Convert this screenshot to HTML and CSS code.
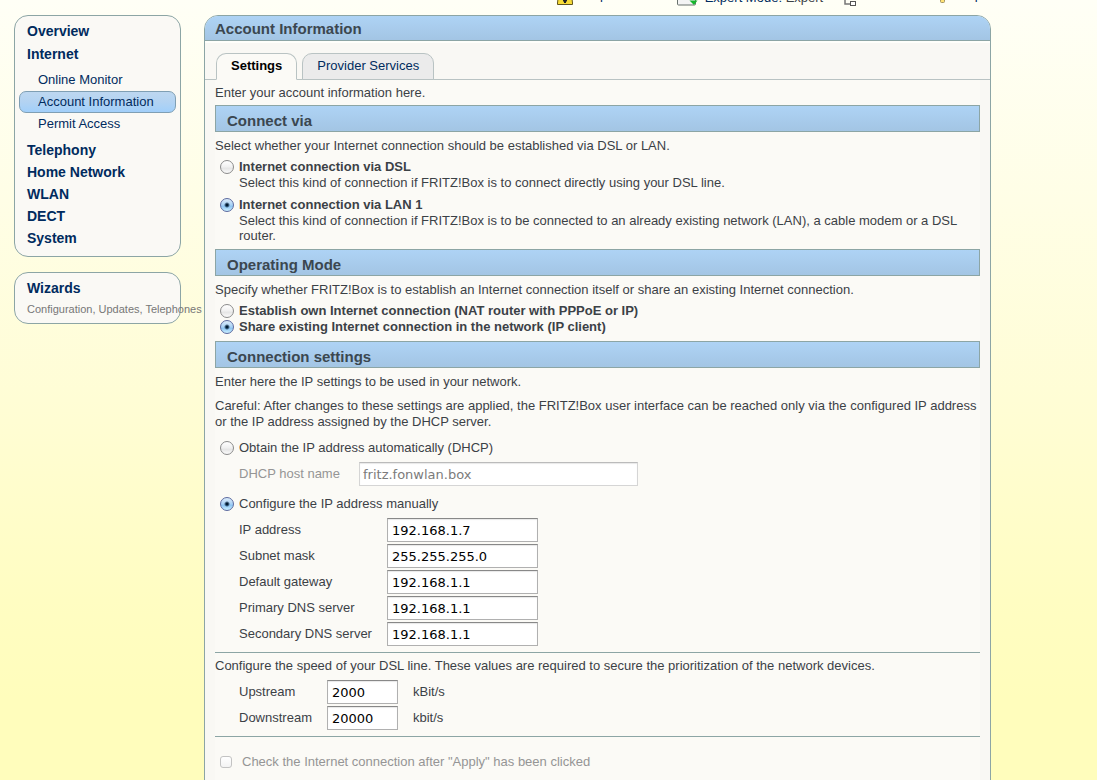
FILE: index.html
```
<!DOCTYPE html>
<html lang="en">
<head>
<meta charset="utf-8">
<title>FRITZ!Box – Account Information</title>
<link rel="stylesheet" href="styles.css">
</head>
<body>
<header class="toolbar">
  <a class="tool raised" href="#"><svg width="16" height="12" viewBox="0 0 16 12"><path d="M2 -4L.5 9v1.500h15V9L14 -4z" fill="#f8dc38" stroke="#62551c"/><path d="M8 2v7M6 6.500h4" stroke="#222" stroke-width="2"/></svg><span>No password</span></a>
  <a class="tool" href="#"><svg width="21" height="12" viewBox="0 0 21 12"><rect x=".5" y="-5" width="18" height="16" rx="1" fill="#f4f4f4" stroke="#68716d"/><path d="M12.500 6.500h8L17 11z" fill="#15b52c"/></svg><span>Expert Mode: <span class="mode">Expert</span></span></a>
  <a class="tool raised contents" href="#"><svg width="12" height="12" viewBox="0 0 12 12"><path d="M1 0v10h6" fill="none" stroke="#777" stroke-width="1.500"/><rect x="6.500" y="7.500" width="5" height="4" fill="#fff" stroke="#555"/></svg><span>Contents</span></a>
  <a class="tool raised" href="#"><svg width="8" height="12" viewBox="0 0 8 12"><rect x=".5" y="2.500" width="4" height="6" rx="1" fill="#ffe274" stroke="#a39564"/></svg><span>Help</span></a>
</header>
<div class="page">
  <aside class="sidebar">
    <nav class="menu" aria-label="Main menu">
      <a class="menu-item" href="#">Overview</a>
      <a class="menu-item" href="#">Internet</a>
      <div class="submenu">
        <a class="sub-item" href="#">Online Monitor</a>
        <a class="sub-item active" href="#">Account Information</a>
        <a class="sub-item" href="#">Permit Access</a>
      </div>
      <a class="menu-item" href="#">Telephony</a>
      <a class="menu-item" href="#">Home Network</a>
      <a class="menu-item" href="#">WLAN</a>
      <a class="menu-item" href="#">DECT</a>
      <a class="menu-item" href="#">System</a>
    </nav>
    <section class="wizards">
      <a class="menu-item" href="#">Wizards</a>
      <p class="wizards-note">Configuration, Updates, Telephones</p>
    </section>
  </aside>
  <main class="panel">
    <h1 class="panel-title">Account Information</h1>
    <nav class="tabs" aria-label="Pages">
      <a class="tab current" href="#">Settings</a>
      <a class="tab" href="#">Provider Services</a>
    </nav>
    <form class="content">
      <p class="intro">Enter your account information here.</p>
      <h2 class="bar">Connect via</h2>
      <p class="lead">Select whether your Internet connection should be established via DSL or LAN.</p>
      <div class="choice strong">
        <input type="radio" name="via" id="via-dsl"><label for="via-dsl">Internet connection via DSL</label>
      </div>
      <p class="hint">Select this kind of connection if FRITZ!Box is to connect directly using your DSL line.</p>
      <div class="choice strong spaced">
        <input type="radio" name="via" id="via-lan" checked><label for="via-lan">Internet connection via LAN 1</label>
      </div>
      <p class="hint">Select this kind of connection if FRITZ!Box is to be connected to an already existing network (LAN), a cable modem or a DSL router.</p>
      <h2 class="bar follow">Operating Mode</h2>
      <p class="lead">Specify whether FRITZ!Box is to establish an Internet connection itself or share an existing Internet connection.</p>
      <div class="choice strong">
        <input type="radio" name="mode" id="mode-own"><label for="mode-own">Establish own Internet connection (NAT router with PPPoE or IP)</label>
      </div>
      <div class="choice strong">
        <input type="radio" name="mode" id="mode-share" checked><label for="mode-share">Share existing Internet connection in the network (IP client)</label>
      </div>
      <h2 class="bar follow">Connection settings</h2>
      <p class="lead">Enter here the IP settings to be used in your network.</p>
      <p class="careful">Careful: After changes to these settings are applied, the FRITZ!Box user interface can be reached only via the configured IP address or the IP address assigned by the DHCP server.</p>
      <div class="choice">
        <input type="radio" name="ip" id="ip-dhcp"><label for="ip-dhcp">Obtain the IP address automatically (DHCP)</label>
      </div>
      <div class="fields host muted">
        <label for="host">DHCP host name</label><input type="text" id="host" value="fritz.fonwlan.box" disabled>
      </div>
      <div class="choice">
        <input type="radio" name="ip" id="ip-manual" checked><label for="ip-manual">Configure the IP address manually</label>
      </div>
      <div class="fields address">
        <label for="addr">IP address</label><input type="text" id="addr" value="192.168.1.7">
        <label for="mask">Subnet mask</label><input type="text" id="mask" value="255.255.255.0">
        <label for="gateway">Default gateway</label><input type="text" id="gateway" value="192.168.1.1">
        <label for="dns1">Primary DNS server</label><input type="text" id="dns1" value="192.168.1.1">
        <label for="dns2">Secondary DNS server</label><input type="text" id="dns2" value="192.168.1.1">
      </div>
      <section class="ruled">
        <p>Configure the speed of your DSL line. These values are required to secure the prioritization of the network devices.</p>
        <div class="fields speed">
          <label for="up">Upstream</label><input type="text" id="up" value="2000"><span>kBit/s</span>
          <label for="down">Downstream</label><input type="text" id="down" value="20000"><span>kbit/s</span>
        </div>
      </section>
      <section class="ruled check muted">
        <input type="checkbox" id="check" disabled><label for="check">Check the Internet connection after "Apply" has been clicked</label>
      </section>
    </form>
  </main>
</div>
</body>
</html>
```
FILE: styles.css
```
* { box-sizing: border-box; }
html {
  min-height: 100%;
  background: linear-gradient(#fffff6, #fffee6 200px, #fffdd5 400px, #fffdc2 600px, #fffdbc 700px) no-repeat #fffdbc;
}
body {
  margin: 0;
  font: 13px/16px "Liberation Sans", Arial, sans-serif;
  color: #3b4146;
}
p, h1, h2 { margin: 0; }
a { color: #002b5e; text-decoration: none; }

.toolbar {
  display: flex;
  align-items: flex-end;
  justify-content: flex-end;
  gap: 21px;
  height: 15px;
  padding: 0 115px 9px 0;
  overflow: hidden;
}
.tool { display: flex; align-items: flex-end; gap: 7px; }
.tool svg { flex: none; }
.tool.raised span { padding-bottom: 3px; }
.tool.contents { margin-right: 4px; }
.mode { color: #3b4146; }

.page {
  display: flex;
  align-items: flex-start;
  gap: 23px;
  padding: 0 106px 0 14px;
}
.sidebar {
  flex: none;
  width: 167px;
  display: flex;
  flex-direction: column;
  gap: 15px;
}
.menu, .wizards {
  border: 1px solid #8ca5a5;
  border-radius: 14px;
  background: #faf9f5;
}
.menu { padding: 4px 4px 7px; }
.menu-item {
  display: block;
  padding-left: 8px;
  font-size: 14px;
  font-weight: bold;
  line-height: 22px;
}
.menu-item:first-child { line-height: 23px; }
.submenu { padding: 4px 0; }
.sub-item {
  display: block;
  padding-left: 18px;
  border: 1px solid transparent;
  border-radius: 7px;
  line-height: 20px;
}
.sub-item.active {
  border-color: #7f9fb4;
  background: linear-gradient(#bdd7f0, #b3d3f2 50%, #a1cffa);
}
.wizards { padding: 4px 4px 5px; }
.wizards-note {
  padding-left: 8px;
  font-size: 11px;
  line-height: 18px;
  white-space: nowrap;
  color: #777;
}

.panel {
  flex: 1;
  min-width: 0;
  border: 1px solid #8ca5a5;
  border-radius: 14px 14px 0 0;
  background: #f9f8f4;
  overflow: hidden;
}
.panel-title {
  height: 25px;
  padding-left: 10px;
  border-bottom: 1px solid #8ca5a5;
  background: linear-gradient(#aed3f5, #a3c5e4);
  font-size: 15px;
  line-height: 26px;
  color: #3b4750;
}
.tabs {
  display: flex;
  gap: 5px;
  padding: 10px 11px 0;
  border-top: 2px solid #fffffb;
  border-bottom: 1px solid #b9c3c3;
}
.tab {
  margin-bottom: -1px;
  padding: 0 14px 1px;
  border: 1px solid #b9c3c3;
  border-radius: 10px 10px 0 0;
  background: #ebebeb;
  line-height: 24px;
}
.tab.current {
  border-bottom-color: #fbfaf6;
  background: #fbfaf6;
  font-weight: bold;
  color: #000;
}
.content {
  margin: 0 10px;
  padding: 5px 0 12px;
  background: #fbfaf6;
}
.bar {
  height: 27px;
  padding: 2px 11px 0;
  border: 1px solid #8ca5a5;
  background: linear-gradient(#aed3f5, #a3c5e4);
  font-size: 15px;
  line-height: 26px;
  color: #3b4750;
}
.intro { margin-bottom: 4px; }
.bar.follow { margin-top: 6px; }
.lead { padding: 5px 0; line-height: 17px; }
.choice {
  display: flex;
  align-items: center;
  gap: 5px;
  padding-left: 5px;
  line-height: 16px;
}
.choice.strong { font-weight: bold; }
.choice.spaced { margin-top: 7px; }
.hint { padding-left: 24px; line-height: 15px; }
.careful { margin: 3px 0 10px; }

input { margin: 0; }
input[type="radio"] {
  appearance: none;
  flex: none;
  width: 14px;
  height: 14px;
  border: 1px solid #8b8b8b;
  border-radius: 50%;
  background: linear-gradient(#fff, #f0f0f0 50%, #e5e5e5 60%, #fbfbfb);
}
input[type="radio"]:checked {
  border-color: #5c6a9f;
  background:
    radial-gradient(circle, #001b33 0 1px, transparent 3px),
    linear-gradient(#dcecfb, #a8d1f5 50%, #8cc4f3 60%, #cbf0ff);
}
input[type="text"] {
  width: 100%;
  height: 24px;
  padding: 0 4px;
  border: 1px solid #b0b0b0;
  border-top-color: #888;
  background: #fff;
  box-shadow: inset 0 1px 1px #e8e8e8;
  font: 13px "DejaVu Sans", sans-serif;
  color: #000;
}
input[type="text"]:disabled {
  padding: 0 3px;
  border-color: #d5d5d5;
  border-top-color: #bbb;
  color: #7b7b7b;
}
.muted { color: #959595; }
.fields {
  display: grid;
  align-items: center;
  justify-content: start;
  gap: 2px 0;
  padding-left: 24px;
}
.host { grid-template-columns: 120px 279px; margin: 6px 0 10px; }
.address { grid-template-columns: 148px 151px; padding-top: 6px; }
.speed { grid-template-columns: 88px 71px auto; padding-top: 6px; }
.speed span { padding-left: 15px; }
.ruled {
  margin-top: 6px;
  padding-top: 5px;
  border-top: 1px solid #8ca5a5;
}
.check {
  display: flex;
  align-items: center;
  gap: 10px;
  padding: 17px 0 8px 5px;
}
input[type="checkbox"] {
  appearance: none;
  flex: none;
  width: 12px;
  height: 12px;
  border: 1px solid #c3c3c3;
  border-radius: 3px;
  background: linear-gradient(#fff, #f3f3f3);
}
```
